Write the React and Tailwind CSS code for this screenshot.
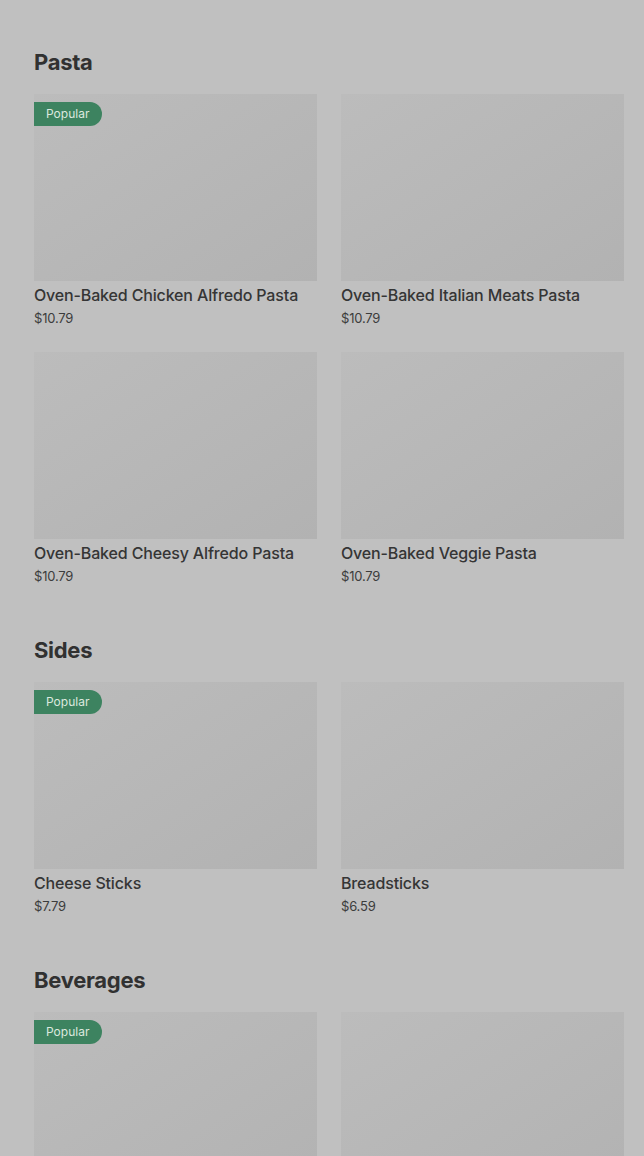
import React from "react";

const sections = [
  {
    title: "Pasta",
    items: [
      { name: "Oven-Baked Chicken Alfredo Pasta", price: "$10.79", popular: true },
      { name: "Oven-Baked Italian Meats Pasta", price: "$10.79" },
      { name: "Oven-Baked Cheesy Alfredo Pasta", price: "$10.79" },
      { name: "Oven-Baked Veggie Pasta", price: "$10.79" },
    ],
  },
  {
    title: "Sides",
    items: [
      { name: "Cheese Sticks", price: "$7.79", popular: true },
      { name: "Breadsticks", price: "$6.59" },
    ],
  },
  {
    title: "Beverages",
    // names below the fold are not visible, only the image tiles
    items: [{ id: "bev-1", popular: true }, { id: "bev-2" }],
  },
];

const ItemCard = ({ item }) => (
  <div className="flex flex-col">
    <div className="relative h-[187px] bg-gradient-to-br from-[#bcbcbc] to-[#b2b2b2]">
      {item.popular && (
        <span className="absolute left-0 top-2 h-6 pl-3 pr-[13px] flex items-center rounded-r-full bg-[#3d8360] text-[12px] text-[#dce8df]">
          Popular
        </span>
      )}
    </div>
    {item.name && (
      <>
        <div className="mt-[3px] text-[16px] leading-[22px] font-medium tracking-[-0.15px] text-[#353535]">{item.name}</div>
        <div className="mt-[2px] text-[13px] leading-5 tracking-[-0.2px] text-[#3c3c3c]">{item.price}</div>
      </>
    )}
  </div>
);

export default function App() {
  return (
    <div
      className="h-[1156px] bg-[#c0c0c0] pt-[46px] pl-[34px] overflow-hidden"
      style={{ fontFamily: "Inter, Roboto, 'Liberation Sans', sans-serif" }}
    >
      <div className="w-[590px] flex flex-col gap-12">
        {sections.map((s) => (
          <section key={s.title}>
            <h2 className="text-[22px] leading-8 font-bold text-[#313131] tracking-[-0.3px] mb-4">{s.title}</h2>
            <div className="grid grid-cols-2 gap-x-6 gap-y-6">
              {s.items.map((it) => (
                <ItemCard key={it.name || it.id} item={it} />
              ))}
            </div>
          </section>
        ))}
      </div>
    </div>
  );
}
